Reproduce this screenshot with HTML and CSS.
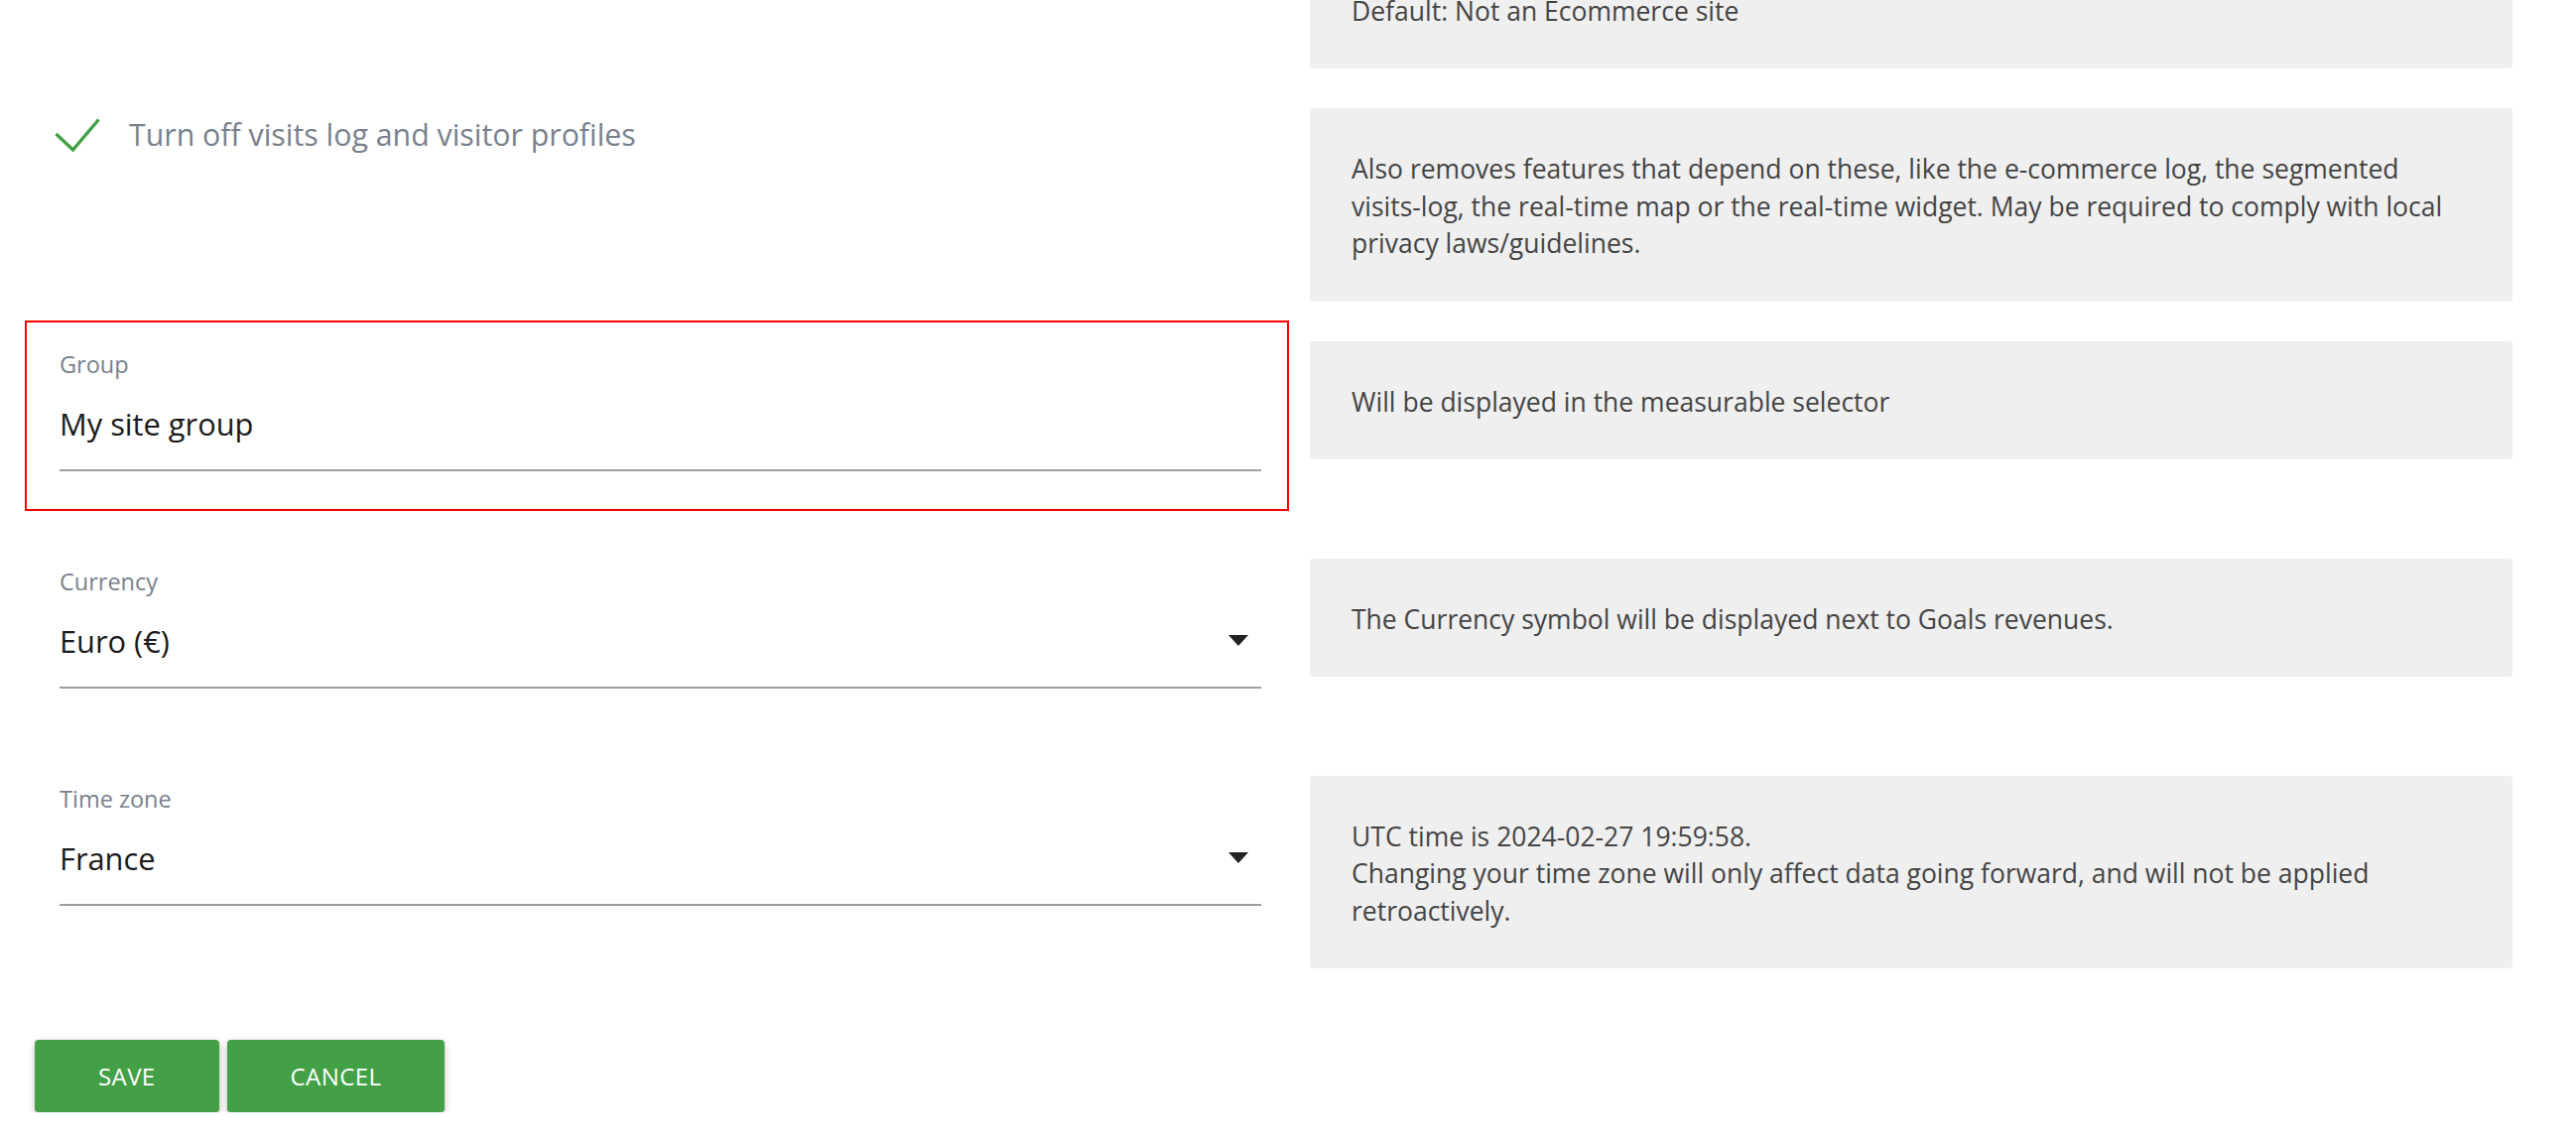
FILE: index.html
```html
<!DOCTYPE html>
<html lang="en">
<head>
<meta charset="utf-8">
<title>Website settings</title>
<link rel="stylesheet" href="styles.css">
</head>
<body>
<div class="page">
  <div class="form-row first-row">
    <div class="field-empty"></div>
    <div class="help">Default: Not an Ecommerce site</div>
  </div>

  <div class="form-row">
    <div class="checkbox-field">
      <svg class="check" width="46" height="34" viewBox="0 0 46 34" aria-hidden="true">
        <polyline points="1.5,16 18.5,32 44.5,1.5" fill="none" stroke="#43a047" stroke-width="3.4"/>
      </svg>
      <span class="checkbox-label">Turn off visits log and visitor profiles</span>
    </div>
    <div class="help">Also removes features that depend on these, like the e-commerce log, the segmented visits-log, the real-time map or the real-time widget. May be required to comply with local privacy laws/guidelines.</div>
  </div>

  <div class="form-row">
    <div class="field highlight">
      <div class="field-label">Group</div>
      <div class="field-input">My site group</div>
    </div>
    <div class="help">Will be displayed in the measurable selector</div>
  </div>

  <div class="form-row">
    <div class="field">
      <div class="field-label">Currency</div>
      <div class="field-input select">
        <span>Euro (€)</span>
        <svg class="caret" width="20" height="11" viewBox="0 0 20 11" aria-hidden="true"><polygon points="0,0 20,0 10,11" fill="#222"/></svg>
      </div>
    </div>
    <div class="help">The Currency symbol will be displayed next to Goals revenues.</div>
  </div>

  <div class="form-row">
    <div class="field">
      <div class="field-label">Time zone</div>
      <div class="field-input select">
        <span>France</span>
        <svg class="caret" width="20" height="11" viewBox="0 0 20 11" aria-hidden="true"><polygon points="0,0 20,0 10,11" fill="#222"/></svg>
      </div>
    </div>
    <div class="help">UTC time is 2024-02-27 19:59:58.<br>Changing your time zone will only affect data going forward, and will not be applied retroactively.</div>
  </div>

  <div class="actions">
    <button class="btn" type="button">Save</button>
    <button class="btn" type="button">Cancel</button>
  </div>
</div>
</body>
</html>
```

FILE: styles.css
```css
html, body {
  margin: 0;
  padding: 0;
  background: #ffffff;
}

body {
  font-family: "Open Sans", "Noto Sans", "Liberation Sans", sans-serif;
  overflow: hidden;
}

.page {
  padding: 0 64px 0 25px;
}

.form-row {
  display: grid;
  grid-template-columns: 1274px 1fr;
  column-gap: 21px;
  align-items: start;
  margin-bottom: 19px;
}

.first-row {
  margin-top: -71.5px;
}

.help {
  margin-top: 21px;
  background: #efefef;
  border-radius: 3px;
  padding: 43px 42px 39px;
  font-size: 26.5px;
  line-height: 37.5px;
  color: #444444;
}

.checkbox-field {
  display: flex;
  align-items: center;
  padding: 30px 0 0 30px;
  height: 36px;
}

.check {
  display: block;
  margin-right: 29px;
}

.checkbox-label {
  font-size: 30.3px;
  line-height: 36px;
  color: #78818d;
}

.field {
  padding: 29px 28px 40px 35px;
  margin-bottom: 8px;
}

.highlight {
  outline: 2px solid #ff0000;
  outline-offset: -2px;
}

.field-label {
  font-size: 23.5px;
  line-height: 30px;
  color: #78818d;
  margin-bottom: 20px;
}

.field-input {
  font-size: 30.8px;
  line-height: 50px;
  color: #1a1a1a;
  padding-bottom: 21px;
  border-bottom: 2px solid #9e9e9e;
}

.select {
  display: flex;
  align-items: center;
  justify-content: space-between;
  padding-right: 13px;
}

.caret {
  display: block;
}

.actions {
  display: flex;
  gap: 8px;
  margin-top: 72px;
  padding-left: 10px;
}

.btn {
  font-family: "Open Sans", "Noto Sans", "Liberation Sans", sans-serif;
  height: 73px;
  padding: 0 64px;
  border: none;
  border-radius: 4px;
  background: #43a047;
  color: #ffffff;
  font-size: 24px;
  letter-spacing: 0.4px;
  text-transform: uppercase;
  box-shadow: 0 3px 3px 0 rgba(0, 0, 0, 0.14), 0 5px 2px -3px rgba(0, 0, 0, 0.12), 0 2px 8px 0 rgba(0, 0, 0, 0.2);
  cursor: pointer;
}
```
